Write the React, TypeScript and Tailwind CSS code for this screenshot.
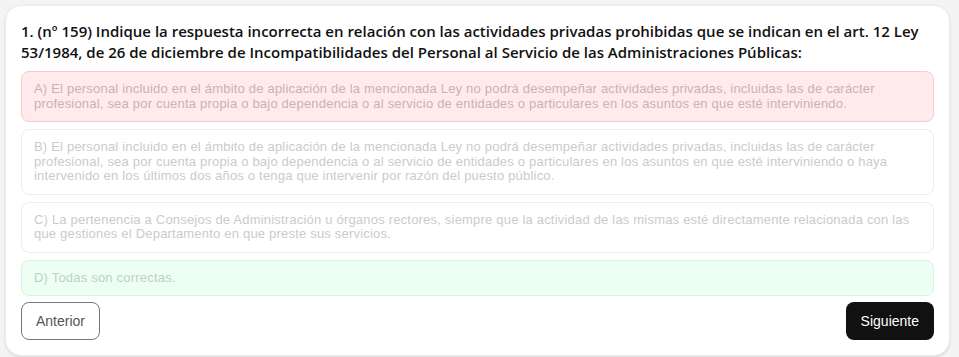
const options = [
  {
    text: 'A) El personal incluido en el ámbito de aplicación de la mencionada Ley no podrá desempeñar actividades privadas, incluidas las de carácter profesional, sea por cuenta propia o bajo dependencia o al servicio de entidades o particulares en los asuntos en que esté interviniendo.',
    box: 'bg-[#ffebeb] border-[#ffc8c8] text-[#c7b3b3]',
  },
  {
    text: 'B) El personal incluido en el ámbito de aplicación de la mencionada Ley no podrá desempeñar actividades privadas, incluidas las de carácter profesional, sea por cuenta propia o bajo dependencia o al servicio de entidades o particulares en los asuntos en que esté interviniendo o haya intervenido en los últimos dos años o tenga que intervenir por razón del puesto público.',
    box: 'bg-white border-[#ececec] text-[#cbcbcb]',
  },
  {
    text: 'C) La pertenencia a Consejos de Administración u órganos rectores, siempre que la actividad de las mismas esté directamente relacionada con las que gestiones el Departamento en que preste sus servicios.',
    box: 'bg-white border-[#ececec] text-[#cbcbcb]',
  },
  {
    text: 'D) Todas son correctas.',
    box: 'bg-[#edfff2] border-[#d3f5dd] text-[#bfd0c4]',
  },
];

export default function App() {
  return (
    <div className="w-[959px] h-[357px] bg-[#f4f4f4] p-[5px] pr-[9px]">
      <div className="bg-white rounded-2xl border border-[#ececec] shadow-sm px-[15px] pt-[15px] pb-[15px]">
        <h1 className="font-['Open_Sans',sans-serif] font-semibold text-[15px] leading-[20.5px] text-[#111] mb-[9px]">
          1. (nº 159) Indique la respuesta incorrecta en relación con las actividades privadas prohibidas que se indican en el art. 12 Ley 53/1984, de 26 de diciembre de Incompatibilidades del Personal al Servicio de las Administraciones Públicas:
        </h1>

        <div className="flex flex-col gap-[7px] font-['Liberation_Sans',Arial,sans-serif]">
          {options.map((o, i) => (
            <div key={i} className={`border rounded-lg px-3 py-[10px] text-[13px] tracking-[0.2px] leading-[14.5px] ${o.box}`}>
              {o.text}
            </div>
          ))}
        </div>

        <div className="flex justify-between mt-[6px] font-['Liberation_Sans',Arial,sans-serif]">
          <button className="h-[38px] px-[14px] rounded-lg border border-[#777] text-[14px] text-[#555] bg-white">
            Anterior
          </button>
          <button className="h-[38px] px-[15px] rounded-lg bg-[#111] text-[14px] text-white">
            Siguiente
          </button>
        </div>
      </div>
    </div>
  );
}
